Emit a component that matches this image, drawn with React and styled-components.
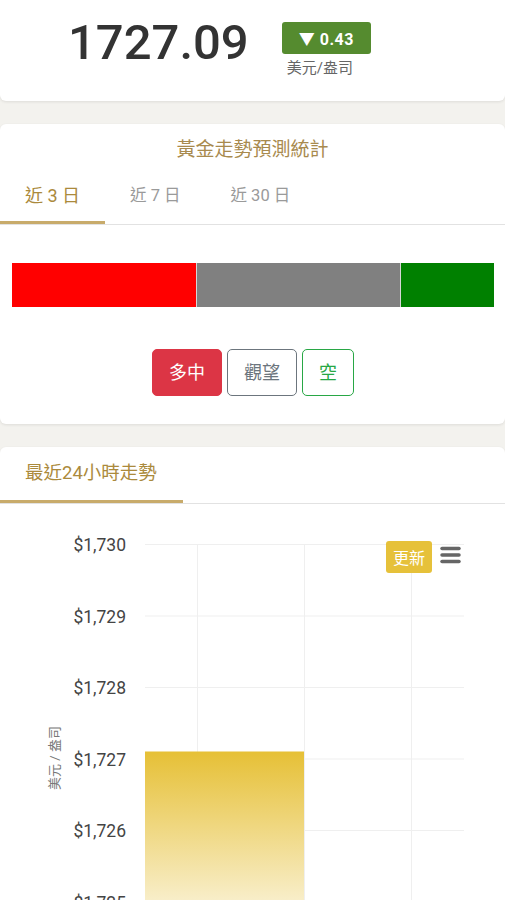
import React from 'react';
import styled, { createGlobalStyle } from 'styled-components';

const Global = createGlobalStyle`
  html, body { margin: 0; padding: 0; background: #f3f2ee; }
  body { font-family: Roboto, "Noto Sans CJK TC", sans-serif; color: #333; }
  * { box-sizing: border-box; }
`;

const Page = styled.div`
  display: flex;
  flex-direction: column;
  gap: 23px;
`;

const Card = styled.section`
  background: #fff;
  border-radius: 6px;
  box-shadow: 0 1px 3px rgba(0, 0, 0, 0.09);
  overflow: hidden;
`;

const PriceCard = styled(Card)`
  border-radius: 0 0 6px 6px;
  height: 101px;
  display: flex;
  align-items: flex-start;
  gap: 33px;
  padding: 18px 0 0 68px;
`;

const Price = styled.div`
  font-size: 49px;
  line-height: 50px;
  font-weight: 500;
  color: #333;
`;

const ChangeBox = styled.div`
  margin-top: 4px;
  display: flex;
  flex-direction: column;
  align-items: flex-start;
`;

const Badge = styled.div`
  height: 32px;
  display: inline-flex;
  align-items: center;
  padding: 0 17px;
  border-radius: 3px;
  background: #558b2f;
  color: #fff;
  font-size: 16px;
  font-weight: 700;
  letter-spacing: 0.5px;
`;

const Unit = styled.div`
  margin-top: 4px;
  padding-left: 5px;
  font-size: 15px;
  line-height: 20px;
  color: #666;
`;

const CardTitle = styled.h2`
  margin: 0;
  padding-top: 13px;
  text-align: center;
  font-size: 19px;
  line-height: 26px;
  font-weight: 400;
  color: #a88a4e;
`;

const TabBar = styled.div`
  display: flex;
  border-bottom: 1px solid #e2e2e2;
`;

const Tab = styled.div`
  padding: ${(p) => p.$pad || '21px 25px 13px'};
  font-size: ${(p) => p.$size || (p.$active ? '18px' : '16.5px')};
  line-height: 24px;
  color: ${(p) => (p.$active ? '#ab8a3c' : '#9a9a9a')};
  border-bottom: 3px solid ${(p) => (p.$active ? '#c8ab6b' : 'transparent')};
  white-space: pre;
`;

const StatBody = styled.div`
  padding: 38px 11px 28px 12px;
  display: flex;
  flex-direction: column;
  gap: 42px;
`;

const StatBar = styled.div`
  display: flex;
  height: 44px;
  gap: 1px;
  background: #d6d6d6;
`;

const Segment = styled.div`
  flex: ${(p) => p.$w};
  background: ${(p) => p.$c};
`;

const ButtonRow = styled.div`
  display: flex;
  justify-content: center;
  gap: 5px;
`;

const Vote = styled.button`
  font-family: inherit;
  font-size: 18px;
  line-height: 27px;
  padding: 9px 16px;
  border-radius: 5px;
  border: 1px solid ${(p) => p.$c};
  background: ${(p) => (p.$filled ? p.$c : '#fff')};
  color: ${(p) => (p.$filled ? '#fff' : p.$c)};
`;

const ChartWrap = styled.div`
  position: relative;
  height: 420px;
`;

const UpdateBtn = styled.div`
  position: absolute;
  left: 386px;
  top: 37px;
  width: 46px;
  height: 32px;
  border-radius: 3px;
  background: #e6c13a;
  color: #fff;
  font-size: 16px;
  display: flex;
  align-items: center;
  justify-content: center;
`;

const Menu = styled.svg`
  position: absolute;
  left: 439px;
  top: 41px;
`;

const yLabels = ['$1,730', '$1,729', '$1,728', '$1,727', '$1,726', '$1,725'];

function Chart() {
  return (
    <ChartWrap>
      <svg width="505" height="420" viewBox="0 0 505 420">
        <defs>
          <linearGradient id="gold" x1="0" y1="247.5" x2="0" y2="420" gradientUnits="userSpaceOnUse">
            <stop offset="0" stopColor="#e6c036" />
            <stop offset="1" stopColor="#fbf5e0" />
          </linearGradient>
        </defs>
        {[197, 304, 411].map((x) => (
          <line key={x} x1={x + 0.5} y1="40" x2={x + 0.5} y2="420" stroke="#efefef" strokeWidth="1" />
        ))}
        {yLabels.map((l, i) => {
          const y = 40 + 71.5 * i;
          return (
            <g key={l}>
              <line x1="145" y1={y + 0.5} x2="464" y2={y + 0.5} stroke="#efefef" strokeWidth="1" />
              <text x="126" y={y + 7} textAnchor="end" fontSize="17.5" fill="#444" fontFamily="Roboto, sans-serif">
                {l}
              </text>
            </g>
          );
        })}
        <rect x="145" y="247.5" width="159" height="175" fill="url(#gold)" />
        <text
          x="0"
          y="0"
          transform="translate(59 254) rotate(-90)"
          textAnchor="middle"
          fontSize="13"
          fill="#777"
          fontFamily='Roboto, "Noto Sans CJK TC", sans-serif'
        >
          美元 / 盎司
        </text>
      </svg>
      <UpdateBtn>更新</UpdateBtn>
      <Menu width="24" height="20" viewBox="0 0 24 20">
        <g stroke="#666" strokeWidth="3.5" strokeLinecap="round">
          <line x1="3" y1="3.5" x2="20" y2="3.5" />
          <line x1="3" y1="10" x2="20" y2="10" />
          <line x1="3" y1="16.5" x2="20" y2="16.5" />
        </g>
      </Menu>
    </ChartWrap>
  );
}

export default function App() {
  return (
    <>
      <Global />
      <Page>
        <PriceCard>
          <Price>1727.09</Price>
          <ChangeBox>
            <Badge>▼ 0.43</Badge>
            <Unit>美元/盎司</Unit>
          </ChangeBox>
        </PriceCard>

        <Card>
          <CardTitle>黃金走勢預測統計</CardTitle>
          <TabBar>
            <Tab $active>近 3 日</Tab>
            <Tab>近 7 日</Tab>
            <Tab>近 30 日</Tab>
          </TabBar>
          <StatBody>
            <StatBar>
              <Segment $w={185} $c="#ff0000" />
              <Segment $w={204} $c="#808080" />
              <Segment $w={93} $c="#008000" />
            </StatBar>
            <ButtonRow>
              <Vote $filled $c="#dc3545">多中</Vote>
              <Vote $c="#6c757d">觀望</Vote>
              <Vote $c="#28a745">空</Vote>
            </ButtonRow>
          </StatBody>
        </Card>

        <Card>
          <TabBar>
            <Tab $active $size="18.5px" $pad="14px 26px 15px 25px">最近24小時走勢</Tab>
          </TabBar>
          <Chart />
        </Card>
      </Page>
    </>
  );
}
